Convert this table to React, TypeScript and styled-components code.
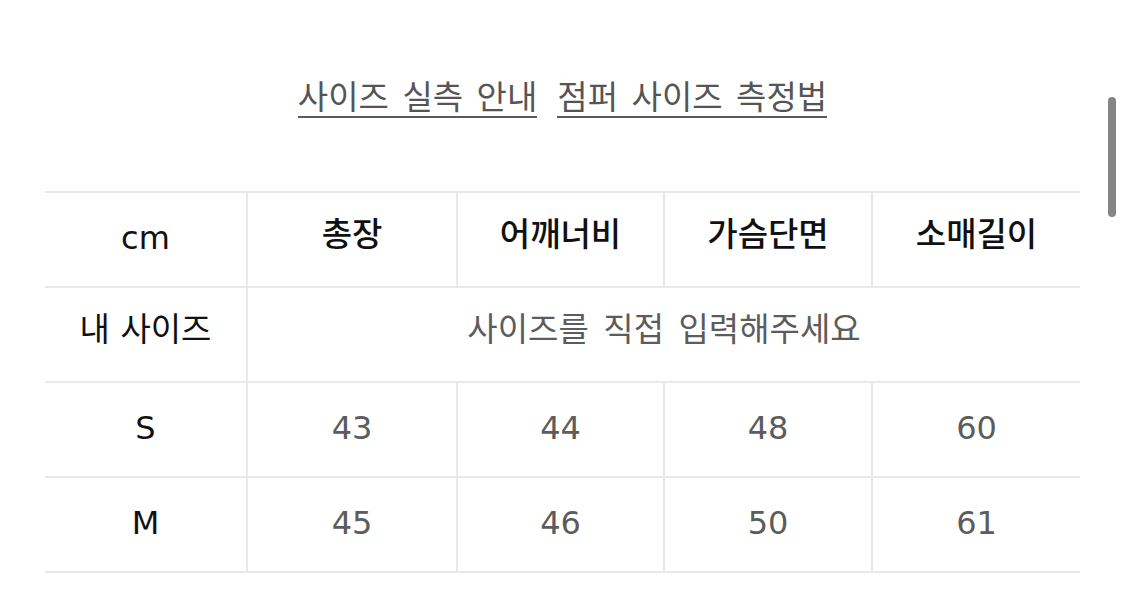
import React from "react";
import styled, { createGlobalStyle } from "styled-components";

const Global = createGlobalStyle`
  html, body {
    margin: 0;
    padding: 0;
    background: #ffffff;
    overflow: hidden;
  }
  body {
    font-family: "DejaVu Sans", "Noto Sans CJK KR", sans-serif;
    -webkit-font-smoothing: antialiased;
  }
`;

const Page = styled.div`
  position: relative;
  width: 1125px;
  height: 599px;
  padding: 81px 45px 0;
  box-sizing: border-box;
  display: flex;
  flex-direction: column;
`;

const LinkRow = styled.div`
  display: flex;
  justify-content: center;
  gap: 20px;
`;

const GuideLink = styled.a`
  display: inline-block;
  font-size: 33px;
  line-height: 33px;
  word-spacing: 3px;
  color: #555555;
  padding: 0 0 2px 0;
  border-bottom: 2px solid #5a5a5a;
  text-decoration: none;
  cursor: pointer;
`;

const SizeTable = styled.div`
  margin-top: 73px;
  display: grid;
  grid-template-columns: 201px 208px 205px 206px 1fr;
  grid-auto-rows: 93px;
  gap: 2px;
  padding: 2px 0;
  background: #e8e8e8;
`;

const Cell = styled.div<{ $head?: boolean; $muted?: boolean; $span?: number }>`
  background: #ffffff;
  display: flex;
  align-items: center;
  justify-content: center;
  box-sizing: border-box;
  padding-bottom: 10px;
  grid-column: ${(p) => (p.$span ? `span ${p.$span}` : "auto")};
  font-size: 33px;
  line-height: 1;
  word-spacing: ${(p) => (p.$muted ? "4px" : "0px")};
  font-weight: ${(p) => (p.$head ? 500 : 400)};
  color: ${(p) => (p.$muted ? "#5c5c5c" : "#111111")};
  white-space: nowrap;
`;

const LatinCell = styled(Cell)`
  font-size: 32px;
  font-weight: 400;
  padding-bottom: 3px;
`;

const ScrollThumb = styled.div`
  position: absolute;
  left: 1108px;
  top: 97px;
  width: 8px;
  height: 120px;
  border-radius: 4px;
  background: #858585;
  box-shadow: 0 0 0 1px rgba(255, 255, 255, 0.8);
`;

const columns = ["총장", "어깨너비", "가슴단면", "소매길이"];
const rows: { size: string; values: number[] }[] = [
  { size: "S", values: [43, 44, 48, 60] },
  { size: "M", values: [45, 46, 50, 61] },
];

export default function App() {
  return (
    <>
      <Global />
      <Page>
        <LinkRow>
          <GuideLink>사이즈 실측 안내</GuideLink>
          <GuideLink>점퍼 사이즈 측정법</GuideLink>
        </LinkRow>
        <SizeTable>
          <LatinCell>cm</LatinCell>
          {columns.map((c) => (
            <Cell key={c} $head>
              {c}
            </Cell>
          ))}
          <Cell>내 사이즈</Cell>
          <Cell $muted $span={4}>
            사이즈를 직접 입력해주세요
          </Cell>
          {rows.map((r) => (
            <React.Fragment key={r.size}>
              <LatinCell>{r.size}</LatinCell>
              {r.values.map((v, i) => (
                <LatinCell key={i} $muted>
                  {v}
                </LatinCell>
              ))}
            </React.Fragment>
          ))}
        </SizeTable>
        <ScrollThumb />
      </Page>
    </>
  );
}
